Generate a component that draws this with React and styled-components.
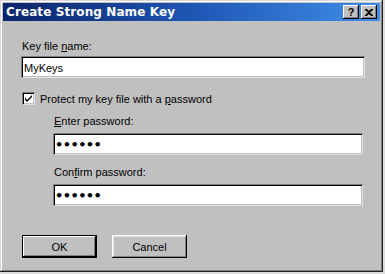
import React from 'react';
import styled, { createGlobalStyle } from 'styled-components';

const Global = createGlobalStyle`
  html, body {
    margin: 0;
    padding: 0;
    background: #dcdcdc;
  }
  body {
    font-family: "Liberation Sans", Arial, sans-serif;
    font-size: 11px;
  }
`;

const Window = styled.div`
  width: 383px;
  height: 272px;
  box-sizing: border-box;
  background: #c0c0c0;
  padding: 3px;
  box-shadow: inset -1px -1px 0 #202020, inset 1px 1px 0 #d8d8d8,
    inset -2px -2px 0 #808080, inset 2px 2px 0 #ffffff;
  display: flex;
  flex-direction: column;
`;

const TitleBar = styled.div`
  height: 18px;
  background: linear-gradient(to right, #0a246a 0%, #1f56b4 50%, #3f8ee8 100%);
  display: flex;
  align-items: center;
  justify-content: space-between;
  padding: 0 3px 0 3px;
`;

const Title = styled.span`
  color: #ffffff;
  font-family: "DejaVu Sans", "Liberation Sans", sans-serif;
  font-weight: bold;
  font-size: 12px;
  letter-spacing: 0.1px;
`;

const Caps = styled.div`
  display: flex;
  gap: 2px;
`;

const CapButton = styled.div`
  width: 16px;
  height: 14px;
  box-sizing: border-box;
  background: #c0c0c0;
  box-shadow: inset -1px -1px 0 #000000, inset 1px 1px 0 #ffffff,
    inset -2px -2px 0 #808080;
  display: flex;
  align-items: center;
  justify-content: center;
  font-family: "Liberation Sans", Arial, sans-serif;
  font-weight: bold;
  font-size: 11px;
  color: #000;
  line-height: 1;
`;

const Body = styled.div`
  display: flex;
  flex-direction: column;
  padding: 19px 15px 0 18px;
`;

const Label = styled.label`
  display: block;
  color: #000;
  line-height: 13px;
  padding-left: 1px;
  margin-bottom: ${p => p.$gap || 3}px;
  u {
    text-decoration: underline;
  }
`;

const Field = styled.input`
  box-sizing: border-box;
  height: 22px;
  width: 100%;
  border: none;
  outline: none;
  background: #ffffff;
  padding: 2px 3px 0;
  font-family: "Liberation Sans", Arial, sans-serif;
  font-size: 11px;
  color: #000;
  box-shadow: inset 1px 1px 0 #808080, inset -1px -1px 0 #e0e0e0,
    inset 2px 2px 0 #000000, inset -2px -2px 0 #c0c0c0;
  &[type='password'] {
    font-family: "DejaVu Sans", sans-serif;
    font-weight: bold;
    font-size: 13px;
    letter-spacing: -0.6px;
    padding: 1px 2px 0;
  }
`;

const CheckRow = styled.div`
  display: flex;
  align-items: center;
  gap: 5px;
  margin: 14px 0 0 1px;
`;

const Box = styled.span`
  width: 13px;
  height: 13px;
  box-sizing: border-box;
  background: #fff;
  box-shadow: inset 1px 1px 0 #808080, inset -1px -1px 0 #e0e0e0,
    inset 2px 2px 0 #000000, inset -2px -2px 0 #c0c0c0;
  display: flex;
  align-items: center;
  justify-content: center;
`;

const Indent = styled.div`
  margin: 10px 2px 0 32px;
  display: flex;
  flex-direction: column;
`;

const Gap = styled.div`
  height: ${p => p.$h}px;
`;

const ButtonRow = styled.div`
  display: flex;
  gap: 15px;
  margin: 29px 0 0 1px;
`;

const Button = styled.button`
  width: 75px;
  height: 23px;
  box-sizing: border-box;
  border: none;
  background: #c0c0c0;
  font-family: "Liberation Sans", Arial, sans-serif;
  font-size: 11px;
  color: #000;
  padding: 0;
  box-shadow: ${p =>
    p.$default
      ? 'inset 0 0 0 1px #000, inset -2px -2px 0 #000, inset 2px 2px 0 #fff, inset -3px -3px 0 #808080'
      : 'inset -1px -1px 0 #000, inset 1px 1px 0 #fff, inset -2px -2px 0 #808080, inset 2px 2px 0 #dfdfdf'};
`;

export default function App() {
  return (
    <>
      <Global />
      <Window>
        <TitleBar>
          <Title>Create Strong Name Key</Title>
          <Caps>
            <CapButton>?</CapButton>
            <CapButton>
              <svg width="8" height="7" viewBox="0 0 8 7">
                <path d="M0 0h2l2 2 2-2h2v1L5 3.5 8 6v1H6L4 5 2 7H0V6l3-2.5L0 1z" fill="#000" />
              </svg>
            </CapButton>
          </Caps>
        </TitleBar>
        <Body>
          <Label>
            Key file <u>n</u>ame:
          </Label>
          <Field defaultValue="MyKeys" readOnly />
          <CheckRow>
            <Box>
              <svg width="7" height="7" viewBox="0 0 7 7">
                <path d="M0 2v3l2 2 5-5V0L2 5z" fill="#000" />
              </svg>
            </Box>
            <span>
              Protect my key file with a <u>p</u>assword
            </span>
          </CheckRow>
          <Indent>
            <Label $gap={5}>
              <u>E</u>nter password:
            </Label>
            <Field type="password" defaultValue="secret" readOnly />
            <Gap $h={11} />
            <Label $gap={5}>
              Con<u>f</u>irm password:
            </Label>
            <Field type="password" defaultValue="secret" readOnly />
          </Indent>
          <ButtonRow>
            <Button $default>OK</Button>
            <Button>Cancel</Button>
          </ButtonRow>
        </Body>
      </Window>
    </>
  );
}
